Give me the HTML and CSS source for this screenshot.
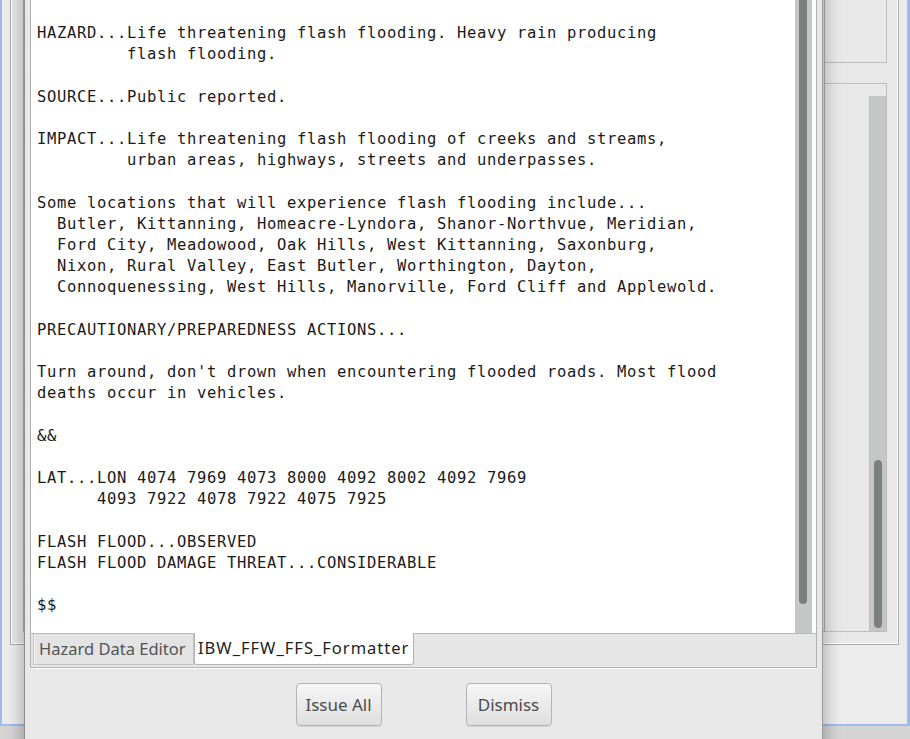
FILE: index.html
```
<!DOCTYPE html>
<html>
<head>
<meta charset="utf-8">
<link rel="stylesheet" href="styles.css">
</head>
<body>
<div class="desktop">
  <div class="bgwin">
    <div class="frame">
      <div class="leftbox"></div>
      <div class="rightcol">
        <div class="box1"></div>
        <div class="box2">
          <div class="box2-body"></div>
          <div class="vscroll bg-scroll"><div class="thumb"></div></div>
        </div>
      </div>
    </div>
  </div>

  <div class="dialog">
    <div class="notebook">
      <div class="textview">
        <pre class="text">HAZARD...Life threatening flash flooding. Heavy rain producing
         flash flooding.

SOURCE...Public reported.

IMPACT...Life threatening flash flooding of creeks and streams,
         urban areas, highways, streets and underpasses.

Some locations that will experience flash flooding include...
  Butler, Kittanning, Homeacre-Lyndora, Shanor-Northvue, Meridian,
  Ford City, Meadowood, Oak Hills, West Kittanning, Saxonburg,
  Nixon, Rural Valley, East Butler, Worthington, Dayton,
  Connoquenessing, West Hills, Manorville, Ford Cliff and Applewold.

PRECAUTIONARY/PREPAREDNESS ACTIONS...

Turn around, don't drown when encountering flooded roads. Most flood
deaths occur in vehicles.

&amp;&amp;

LAT...LON 4074 7969 4073 8000 4092 8002 4092 7969
      4093 7922 4078 7922 4075 7925

FLASH FLOOD...OBSERVED
FLASH FLOOD DAMAGE THREAT...CONSIDERABLE

$$</pre>
        <div class="vscroll dlg-scroll"><div class="thumb"></div></div>
      </div>
      <div class="tabstrip">
        <div class="tab">Hazard Data Editor</div>
        <div class="tab active">IBW_FFW_FFS_Formatter</div>
        <div class="tabfill"></div>
      </div>
    </div>
    <div class="buttons">
      <button class="btn">Issue All</button>
      <button class="btn">Dismiss</button>
    </div>
  </div>
</div>
</body>
</html>
```
FILE: styles.css
```
html, body {
  margin: 0;
  padding: 0;
}
body {
  background: #d6d6d6;
  width: 910px;
  height: 739px;
  overflow: hidden;
}
.desktop {
  position: relative;
  width: 910px;
  height: 739px;
  overflow: hidden;
  background: #d4d4d4;
}

/* background window */
.bgwin {
  position: absolute;
  left: 0;
  top: -20px;
  width: 910px;
  height: 746px;
  box-sizing: border-box;
  background: #ececec;
  border-left: 2px solid #9ebbee;
  border-right: 3px solid #9ebbee;
  border-bottom: 2px solid #9ebbee;
  padding: 0 8px 0 8px;
}
.frame {
  height: 665px;
  box-sizing: border-box;
  border: 1px solid #ababab;
  border-top: none;
  box-shadow: inset 1px 0 0 #fff, inset -1px -1px 0 #fff;
  background: #e8e8e8;
  display: flex;
  padding: 0 11px 12px 12px;
}
.leftbox {
  flex: 1;
  border: 1px solid #b0b0b0;
  border-top: none;
  background: #e4e4e4;
}
.rightcol {
  width: 62px;
  display: flex;
  flex-direction: column;
  gap: 20px;
}
.box1 {
  height: 83px;
  box-sizing: border-box;
  border: 1px solid #bdbdbd;
  border-top: none;
  border-left: none;
}
.box2 {
  flex: 1;
  box-sizing: border-box;
  border: 1px solid #bdbdbd;
  border-left: none;
  display: flex;
  padding-top: 12px;
}
.box2-body {
  flex: 1;
}

/* scrollbars */
.vscroll {
  width: 17px;
  box-sizing: border-box;
  background: #c5c6c6;
  border-left: 1px solid #bdbdbd;
  position: relative;
}
.vscroll .thumb {
  position: absolute;
  left: 4px;
  width: 8px;
  border-radius: 4px;
  background: #7c7f7f;
}
.bg-scroll .thumb {
  top: 364px;
  bottom: 3px;
}
.dlg-scroll .thumb {
  top: -10px;
  bottom: 29px;
}

/* dialog */
.dialog {
  position: absolute;
  left: 24px;
  top: -20px;
  width: 799px;
  height: 790px;
  box-sizing: border-box;
  background: #e8e8e8;
  border-left: 1px solid #8d8d8d;
  border-right: 1px solid #9a9a9a;
  box-shadow: 0 0 16px 2px rgba(0, 0, 0, 0.28);
  padding: 0 5px;
  display: flex;
  flex-direction: column;
}
.notebook {
  border: 1px solid #b2b2b2;
  border-top: none;
  box-shadow: inset -1px 0 0 #fff, 0 1px 0 #fff;
  display: flex;
  flex-direction: column;
}
.textview {
  height: 653px;
  background: #fff;
  display: flex;
  padding-right: 4px;
}
.text {
  flex: 1;
  margin: 0;
  padding: 43px 0 0 6px;
  font-family: "DejaVu Sans Mono", monospace;
  font-size: 15.5px;
  letter-spacing: 0.67px;
  line-height: 21.2px;
  color: #1a1a1a;
  overflow: hidden;
}
.dlg-scroll {
  border-left: none;
}
.tabstrip {
  height: 34px;
  box-sizing: border-box;
  border-top: 1px solid #b8b8b8;
  background: #e6e6e6;
  display: flex;
  align-items: flex-start;
  padding-left: 2px;
  padding-bottom: 2px;
}
.tab {
  height: 31px;
  box-sizing: border-box;
  padding: 0 0 0 5px;
  width: 161px;
  font-family: "Noto Sans", sans-serif;
  font-size: 16.5px;
  line-height: 30px;
  color: #545454;
  background: #e3e3e3;
  border: 1px solid #c2c2c2;
  border-top: none;
  box-shadow: inset 1px 0 0 #f4f4f4;
  white-space: nowrap;
  overflow: hidden;
}
.tab.active {
  width: 220px;
  background: #fff;
  color: #1e1e1e;
  margin-top: -1px;
  height: 32px;
  border: 1px solid #b4b4b4;
  border-top: none;
  border-radius: 0 0 3px 3px;
  box-shadow: none;
  padding: 0 0 0 3px;
  letter-spacing: 1px;
}
.tabfill {
  flex: 1;
}

.buttons {
  display: flex;
  justify-content: center;
  gap: 84px;
  margin-top: 15px;
}
.btn {
  width: 86px;
  height: 43px;
  box-sizing: border-box;
  border: 1px solid #b3b3b3;
  border-radius: 4px;
  background: linear-gradient(#f6f6f6, #dedede);
  box-shadow: 0 1px 0 rgba(0,0,0,0.08);
  font-family: "Noto Sans", sans-serif;
  font-size: 17px;
  color: #4b4b4b;
  padding: 0;
}
```
